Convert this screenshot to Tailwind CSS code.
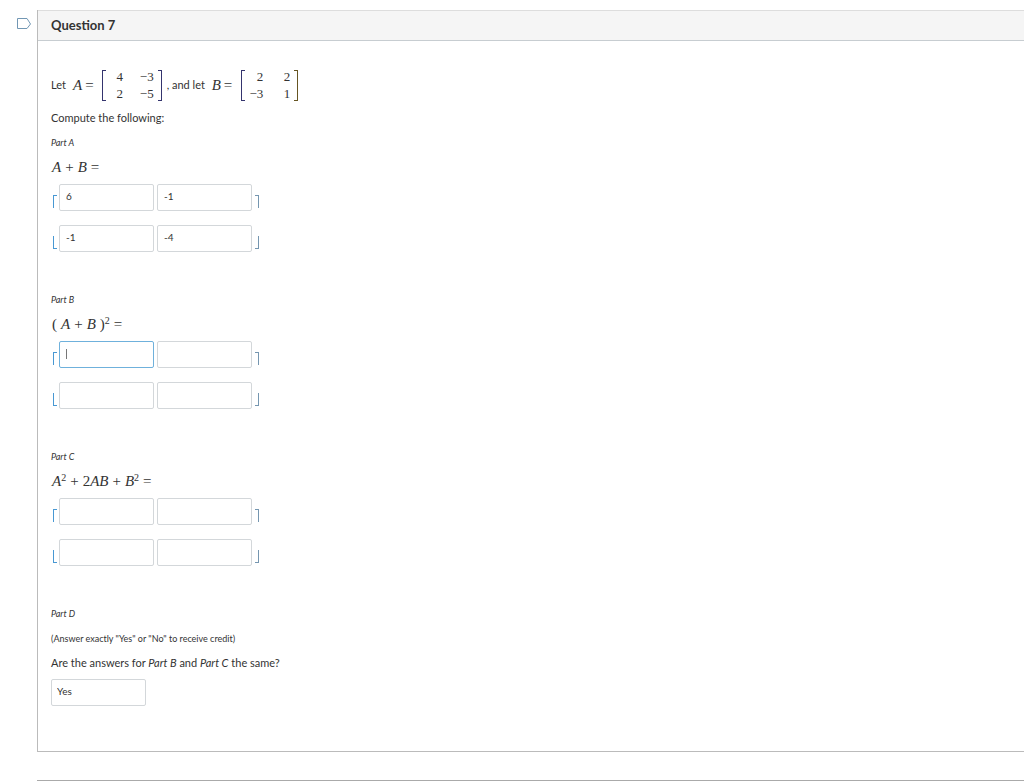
<!DOCTYPE html>
<html lang="en">
<head>
<meta charset="utf-8">
<title>Question 7</title>
<script src="https://cdn.jsdelivr.net/npm/@tailwindcss/browser@4"></script>
</head>
<body class="bg-white font-['Lato',sans-serif] text-[11px] leading-4 text-[#333]">
<main class="flex flex-col pt-[10px]">
  <div class="flex">
    <button type="button" aria-label="Flag question" class="ml-4 mt-[6px] h-4 w-[21px] shrink-0">
      <svg width="15" height="12" viewBox="0 0 15 12" fill="none" stroke="#7297b4" stroke-width="1"><path d="M1.5 0.5H11L14.5 6L11 10.5H1.5Z"/></svg>
    </button>
    <section class="min-w-0 flex-1 border-b border-l border-[#bbb]">
      <h1 class="flex h-[31px] items-center border-y border-t-[#ddd] border-b-[#c7cdd1] bg-[#f5f5f5] pb-[2px] pl-[13px] text-[13px] font-bold">Question 7</h1>
      <div class="px-[13px] pb-[45px] pt-7">
        <div class="flex h-8 items-center">
          <span class="w-[22px]">Let</span>
          <span class="flex gap-[3px] font-['Liberation_Serif',serif] text-[15px]"><i>A</i><span>=</span></span>
          <span class="ml-2 h-[31px] w-1 border-y border-l border-[#34346e]"></span>
          <span class="grid w-[52px] grid-cols-[28px_20px] text-center font-['Liberation_Serif',serif] text-[13px] leading-[17px]"><span>4</span><span class="text-right">−3</span><span>2</span><span class="text-right">−5</span></span>
          <span class="h-[31px] w-1 border-y border-r border-[#34346e]"></span>
          <span class="ml-[5px] w-[45px]">, and let</span>
          <span class="flex gap-[3px] font-['Liberation_Serif',serif] text-[15px]"><i>B</i><span>=</span></span>
          <span class="ml-[9px] h-[31px] w-1 border-y border-l border-[#34346e]"></span>
          <span class="grid w-[49px] grid-cols-[18px_25px] gap-x-[2px] text-right font-['Liberation_Serif',serif] text-[13px] leading-[17px]"><span>2</span><span>2</span><span>−3</span><span>1</span></span>
          <span class="h-[31px] w-1 border-y border-r border-[#665522]"></span>
        </div>
        <p class="mt-[9px]">Compute the following:</p>

        <section class="mt-[9px]">
          <h2 class="text-[9px] leading-4 italic">Part A</h2>
          <p class="mt-2 flex gap-1 pl-px font-['Liberation_Serif',serif] text-[15px] leading-4"><i>A</i><span>+</span><i>B</i><span>=</span></p>
          <div class="mt-[9px] flex flex-col gap-[14px]">
            <div class="flex items-center gap-[3px]">
              <span class="ml-[2px] mt-2 h-[13px] w-1 border-l border-t border-[#4898d3]"></span>
              <input aria-label="A plus B, row 1, column 1" value="6" class="-ml-px h-[27px] w-[95px] rounded-xs border border-[#d3d7da] px-[6px] pb-[3px] text-[10px]">
              <input aria-label="A plus B, row 1, column 2" value="-1" class="h-[27px] w-[95px] rounded-xs border border-[#d3d7da] px-[6px] pb-[3px] text-[10px]">
              <span class="mt-2 h-[13px] w-1 border-r border-t border-[#7596b0]"></span>
            </div>
            <div class="flex items-center gap-[3px]">
              <span class="ml-[2px] mt-2 h-[13px] w-1 border-b border-l border-[#4898d3]"></span>
              <input aria-label="A plus B, row 2, column 1" value="-1" class="-ml-px h-[27px] w-[95px] rounded-xs border border-[#d3d7da] px-[6px] pb-[3px] text-[10px]">
              <input aria-label="A plus B, row 2, column 2" value="-4" class="h-[27px] w-[95px] rounded-xs border border-[#d3d7da] px-[6px] pb-[3px] text-[10px]">
              <span class="mt-2 h-[13px] w-1 border-b border-r border-[#7596b0]"></span>
            </div>
          </div>
        </section>

        <section class="mt-10">
          <h2 class="text-[9px] leading-4 italic">Part B</h2>
          <p class="mt-2 flex gap-1 pl-px font-['Liberation_Serif',serif] text-[15px] leading-4"><span>(</span><i>A</i><span>+</span><i>B</i><span>)<sup class="text-[10px] leading-none">2</sup></span><span>=</span></p>
          <div class="mt-[9px] flex flex-col gap-[14px]">
            <div class="flex items-center gap-[3px]">
              <span class="ml-[2px] mt-2 h-[13px] w-1 border-l border-t border-[#4898d3]"></span>
              <span class="relative -ml-px flex">
                <input aria-label="A plus B squared, row 1, column 1" class="h-[27px] w-[95px] rounded-xs border border-[#6fb1dc] px-[6px] text-[10px]">
                <span class="absolute left-[7px] top-2 h-[10px] w-px bg-[#777]"></span>
              </span>
              <input aria-label="A plus B squared, row 1, column 2" class="h-[27px] w-[95px] rounded-xs border border-[#d3d7da] px-[6px] text-[10px]">
              <span class="mt-2 h-[13px] w-1 border-r border-t border-[#7596b0]"></span>
            </div>
            <div class="flex items-center gap-[3px]">
              <span class="ml-[2px] mt-2 h-[13px] w-1 border-b border-l border-[#4898d3]"></span>
              <input aria-label="A plus B squared, row 2, column 1" class="-ml-px h-[27px] w-[95px] rounded-xs border border-[#d3d7da] px-[6px] text-[10px]">
              <input aria-label="A plus B squared, row 2, column 2" class="h-[27px] w-[95px] rounded-xs border border-[#d3d7da] px-[6px] text-[10px]">
              <span class="mt-2 h-[13px] w-1 border-b border-r border-[#7596b0]"></span>
            </div>
          </div>
        </section>

        <section class="mt-10">
          <h2 class="text-[9px] leading-4 italic">Part C</h2>
          <p class="mt-2 flex gap-1 pl-px font-['Liberation_Serif',serif] text-[15px] leading-4"><span><i>A</i><sup class="text-[10px] leading-none">2</sup></span><span>+</span><span>2<i>AB</i></span><span>+</span><span><i>B</i><sup class="text-[10px] leading-none">2</sup></span><span>=</span></p>
          <div class="mt-[9px] flex flex-col gap-[14px]">
            <div class="flex items-center gap-[3px]">
              <span class="ml-[2px] mt-2 h-[13px] w-1 border-l border-t border-[#4898d3]"></span>
              <input aria-label="Expanded form, row 1, column 1" class="-ml-px h-[27px] w-[95px] rounded-xs border border-[#d3d7da] px-[6px] text-[10px]">
              <input aria-label="Expanded form, row 1, column 2" class="h-[27px] w-[95px] rounded-xs border border-[#d3d7da] px-[6px] text-[10px]">
              <span class="mt-2 h-[13px] w-1 border-r border-t border-[#7596b0]"></span>
            </div>
            <div class="flex items-center gap-[3px]">
              <span class="ml-[2px] mt-2 h-[13px] w-1 border-b border-l border-[#4898d3]"></span>
              <input aria-label="Expanded form, row 2, column 1" class="-ml-px h-[27px] w-[95px] rounded-xs border border-[#d3d7da] px-[6px] text-[10px]">
              <input aria-label="Expanded form, row 2, column 2" class="h-[27px] w-[95px] rounded-xs border border-[#d3d7da] px-[6px] text-[10px]">
              <span class="mt-2 h-[13px] w-1 border-b border-r border-[#7596b0]"></span>
            </div>
          </div>
        </section>

        <section class="mt-10">
          <h2 class="text-[9px] leading-4 italic">Part D</h2>
          <p class="mt-[9px] text-[9px] leading-4">(Answer exactly "Yes" or "No" to receive credit)</p>
          <label for="same" class="mt-2 block">Are the answers for <i>Part B</i> and <i>Part C</i> the same?</label>
          <input id="same" value="Yes" class="mt-2 block h-[27px] w-[95px] rounded-xs border border-[#d3d7da] px-[5px] pb-[3px] text-[10px]">
        </section>
      </div>
    </section>
  </div>
  <div class="ml-[37px] mt-7 border-t border-[#aaa]"></div>
</main>
</body>
</html>
